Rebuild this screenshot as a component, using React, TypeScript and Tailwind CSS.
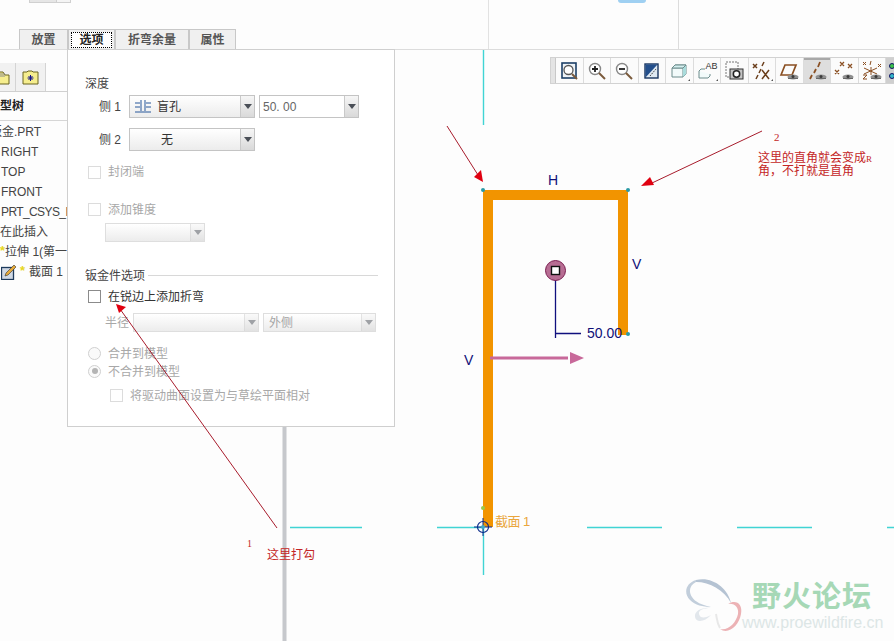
import type { ReactNode } from 'react'

const cjk = "font-['Liberation_Sans','Noto_Sans_CJK_SC',sans-serif]"

function Caret({ muted = false }: { muted?: boolean }) {
  return (
    <span className={`flex h-full w-[14px] shrink-0 items-center justify-center border-l border-[#c9c9c9] bg-gradient-to-b from-[#f6f6f6] to-[#d9d9d9] ${muted ? 'opacity-50' : ''}`}>
      <svg width="8" height="5" viewBox="0 0 8 5"><path d="M0 0h8L4 5z" fill="#4a4f57" /></svg>
    </span>
  )
}

function Combo({ width, height, children, muted = false }: { width: string; height: string; children?: ReactNode; muted?: boolean }) {
  return (
    <div className={`flex items-center border border-[#c4c4c4] bg-gradient-to-b from-white to-[#ececec] ${width} ${height} ${muted ? 'border-[#dedede] text-[#a5a5a5]' : 'text-[#333]'}`}>
      <div className="flex min-w-0 flex-1 items-center">{children}</div>
      <Caret muted={muted} />
    </div>
  )
}

function Check({ muted = false }: { muted?: boolean }) {
  return <span className={`block size-[13px] shrink-0 border bg-white ${muted ? 'border-[#dcdcdc]' : 'border-[#8b8b8b]'}`} />
}

function Radio({ on = false }: { on?: boolean }) {
  return (
    <span className="flex size-[13px] shrink-0 items-center justify-center rounded-full border border-[#d0d0d0] bg-[#fafafa]">
      {on && <span className="size-[6px] rounded-full bg-[#b4b4b4]" />}
    </span>
  )
}

function Label({ children }: { children: ReactNode }) {
  return <span className="translate-y-px">{children}</span>
}

function Tab({ label, width, active = false }: { label: string; width: string; active?: boolean }) {
  return (
    <div className={`flex h-[20px] items-center justify-center border border-b-0 border-[#c8c8c8] bg-[#f0f0f0] text-[12px] font-bold text-[#555] ${width}`}>
      {active ? <span className="border border-dotted border-black bg-white px-[7px] leading-[14px] text-[#222]">{label}</span> : label}
    </div>
  )
}

function ToolIcon({ children, pressed = false }: { children: ReactNode; pressed?: boolean }) {
  return (
    <div className={`flex h-full w-[27.5px] shrink-0 items-center justify-center border-r border-[#dcdcdc] ${pressed ? 'bg-[#dedede] shadow-[inset_0_2px_0_#a8a8a8]' : ''}`}>
      <svg width="24" height="24" viewBox="0 0 24 24" fill="none">{children}</svg>
    </div>
  )
}

const corner = <path d="M21 22h2v-2z" fill="#555" />

const eye = (
  <g>
    <ellipse cx="16" cy="18" rx="5.500" ry="2.600" fill="#909090" />
    <path d="M11 19.500h10" stroke="#666" />
    <circle cx="16" cy="17.500" r="1.500" fill="#3a3a3a" />
  </g>
)

function Toolbar() {
  return (
    <div className="absolute left-[550px] top-[57px] flex h-[27px] w-[344px] overflow-hidden border-y border-l border-[#d2d2d2] bg-[#fbfbfb]">
      <div className="w-[5px] shrink-0 border-r border-[#c8c8c8] bg-[#e4e4e4]" />
      <ToolIcon>
        <rect x="5" y="4" width="14" height="15" stroke="#1c3f66" strokeWidth="1.600" fill="#eef3f7" />
        <circle cx="11.500" cy="11" r="4.500" stroke="#555" strokeWidth="1.300" fill="#fff" />
        <path d="M15 15l5 5" stroke="#7a5a3c" strokeWidth="2" />
      </ToolIcon>
      <ToolIcon>
        <circle cx="10" cy="10" r="5.500" stroke="#888" strokeWidth="1.400" fill="#fff" />
        <path d="M7 10h6M10 7v6" stroke="#222" strokeWidth="1.800" />
        <path d="M14 14l6 6" stroke="#7a5a3c" strokeWidth="2" />
      </ToolIcon>
      <ToolIcon>
        <circle cx="10" cy="10" r="5.500" stroke="#888" strokeWidth="1.400" fill="#fff" />
        <path d="M7 10h6" stroke="#222" strokeWidth="1.800" />
        <path d="M14 14l6 6" stroke="#7a5a3c" strokeWidth="2" />
      </ToolIcon>
      <ToolIcon>
        <rect x="5" y="5" width="13" height="14" fill="#dfe9f2" stroke="#17345f" strokeWidth="1.400" />
        <path d="M5.500 5.500h12L5.500 18.500z" fill="#234f8c" />
        <path d="M10 17l6-7" stroke="#444" strokeDasharray="1.500 1" />
      </ToolIcon>
      <ToolIcon>
        <path d="M5 9l3-3h11v9l-3 3H5z" fill="#f2fafa" stroke="#6d8c8c" />
        <path d="M5 9h11v9" stroke="#6d8c8c" />
        <path d="M16 9l3-3v9l-3 3z" fill="#a9dcdc" />
        <path d="M5 9l3-3h11l-3 3z" fill="#d5f0f0" stroke="#6d8c8c" />
        {corner}
      </ToolIcon>
      <ToolIcon>
        <path d="M4 12l2-2h4M4 12v7h9l2-2v-2" stroke="#6d8c8c" fill="#f2fafa" />
        <text x="10.500" y="10" fontSize="9" fontFamily="Liberation Sans" fill="#333">AB</text>
        {corner}
      </ToolIcon>
      <ToolIcon>
        <rect x="4" y="3" width="12" height="15" stroke="#777" strokeDasharray="2 1" />
        <rect x="8" y="10" width="13" height="10" fill="#c4c4c4" stroke="#333" />
        <circle cx="14.500" cy="15" r="3.200" fill="#fff" stroke="#222" strokeWidth="1.500" />
      </ToolIcon>
      <ToolIcon>
        <path d="M3 5l4 4M7 5L3 9M14 3l-2 4M11 10l-2 4M8 16l-2 4" stroke="#6b3f1c" strokeWidth="1.500" />
        <path d="M12 11l7 9M19 11l-7 9" stroke="#6b3f1c" strokeWidth="1.500" />
        {corner}
      </ToolIcon>
      <ToolIcon>
        <path d="M4 16l4-10h11l-4 10z" stroke="#8a4f22" strokeWidth="1.700" />
        {eye}
      </ToolIcon>
      <ToolIcon pressed>
        <path d="M15 3l-2 5M11 10l-2 4M7 16l-2 4" stroke="#8a4f22" strokeWidth="1.800" />
        {eye}
      </ToolIcon>
      <ToolIcon>
        <path d="M8 3l4 4M12 3L8 7M16 5l4 4M20 5l-4 4M3 11l4 4M7 11l-4 4" stroke="#8a4f22" strokeWidth="1.300" />
        {eye}
      </ToolIcon>
      <ToolIcon>
        <path d="M3 3l3 3M6 3L3 6M11 2l-1 4M18 5l3 3M21 5l-3 3M4 9l13 6M11 8v8M17 9L4 15M3 16h4l-4 4h4" stroke="#8a4f22" strokeWidth="1" />
        {eye}
      </ToolIcon>
      <div className="flex h-full flex-1 flex-col items-start justify-center gap-[4px] bg-[#cfcfcf] pl-[3px]">
        <span className="size-[6px] rounded-full border border-[#116] bg-[#3bc24a]" />
        <span className="size-[6px] rounded-full border border-[#116] bg-[#35b6c8]" />
      </div>
    </div>
  )
}

function ModelTree() {
  const rows = ['RIGHT', 'TOP', 'FRONT']
  return (
    <div className={`absolute left-0 top-[63px] w-[67px] overflow-hidden text-[12px] text-[#444] ${cjk}`}>
      <div className="flex h-[29px] items-end border-b border-[#d0d0d0]">
        <div className="flex h-[29px] w-[16px] items-center justify-end overflow-hidden border-r border-[#d4d4d4] bg-[#f1f1f1] pr-[5px]">
          <svg width="16" height="16" viewBox="0 0 16 16" className="shrink-0">
            <path d="M1 3h8l2 3h4v9H1z" fill="#f6ee8e" stroke="#6b6420" />
            <path d="M5 5h6M5 7h6" stroke="#888" />
          </svg>
        </div>
        <div className="flex h-[29px] w-[30px] items-center justify-center border-r border-[#d4d4d4] bg-[#f1f1f1]">
          <svg width="17" height="16" viewBox="0 0 17 16">
            <path d="M1 3h4l1-1h4l1 1h5v12H1z" fill="#f6ee8e" stroke="#6b6420" />
            <path d="M8.500 6v6M5.500 9h6M6.500 7l4 4M10.500 7l-4 4" stroke="#14148a" />
          </svg>
        </div>
      </div>
      <div className="-ml-[12px] flex h-[29px] items-center border-b border-[#d6d6d6] font-bold whitespace-nowrap text-[#222]">模型树</div>
      <div className="-ml-[10px] mt-[1px] flex h-[20px] items-center whitespace-nowrap">钣金.PRT</div>
      {rows.map((row) => (
        <div key={row} className="flex h-[20px] items-center whitespace-nowrap pl-[1px]">{row}</div>
      ))}
      <div className="flex h-[20px] items-center whitespace-nowrap pl-[1px] tracking-[-0.6px]">PRT_CSYS_DEF</div>
      <div className="flex h-[20px] items-center whitespace-nowrap">在此插入</div>
      <div className="flex h-[20px] items-center whitespace-nowrap">
        <span className="-mt-[3px] w-[9px] text-[13px] font-bold leading-none text-[#e6d620]">*</span>拉伸 1(第一个)
      </div>
      <div className="flex h-[20px] items-center whitespace-nowrap pl-[1px]">
        <svg width="17" height="16" viewBox="0 0 17 16" className="shrink-0">
          <rect x="0.500" y="3.500" width="12" height="12" fill="#cfd8e4" stroke="#1d3a5c" strokeWidth="1.300" />
          <path d="M4 12l1-3 8-8 2 2-8 8z" fill="#e5a93a" stroke="#333" strokeWidth="0.600" />
        </svg>
        <span className="-mt-[3px] ml-[2px] w-[9px] text-[13px] font-bold leading-none text-[#e6d620]">*</span>截面 1
      </div>
    </div>
  )
}

function OptionsPanel() {
  return (
    <div className={`absolute left-[19px] top-[29px] text-[12px] ${cjk}`}>
      <div className="flex pr-0">
        <Tab label="放置" width="w-[49px]" />
        <Tab label="选项" width="w-[47px]" active />
        <Tab label="折弯余量" width="w-[74px]" />
        <Tab label="属性" width="w-[47px]" />
      </div>
      <div className="ml-[48px] h-[378px] w-[328px] border border-[#cfcfcf] bg-white pl-[17px] text-[#444]">
        <div className="mt-[23px] flex h-[20px] items-center"><Label>深度</Label></div>
        <div className="mt-[2px] flex h-[23px] items-center">
          <span className="ml-[14px] w-[30px]">侧 1</span>
          <Combo width="w-[126px]" height="h-[23px]">
            <svg width="16" height="14" viewBox="0 0 16 14" className="ml-[5px] mr-[6px] shrink-0">
              <path d="M0 3h5M0 7h5M11 3h5M11 7h5M6 0v11M10 0v11M0 12h16" stroke="#27579a" strokeWidth="1" fill="none" />
            </svg>
            盲孔
          </Combo>
          <div className="ml-[4px] flex h-[23px] w-[100px] items-center border border-[#c4c4c4] bg-white">
            <span className="flex-1 pl-[3px] text-[#666]">50. 00</span>
            <Caret />
          </div>
        </div>
        <div className="mt-[10px] flex h-[23px] items-center">
          <span className="ml-[14px] w-[30px]">侧 2</span>
          <Combo width="w-[126px]" height="h-[23px]">
            <span className="ml-[31px]">无</span>
          </Combo>
        </div>
        <div className="mt-[14px] flex h-[14px] items-center gap-[7px] pl-[3px] text-[#a8a8a8]">
          <Check muted />
          <span>封闭端</span>
        </div>
        <div className="mt-[23px] flex h-[14px] items-center gap-[7px] pl-[3px] text-[#a8a8a8]">
          <Check muted />
          <Label>添加锥度</Label>
        </div>
        <div className="ml-[20px] mt-[7px]">
          <Combo width="w-[100px]" height="h-[19px]" muted />
        </div>
        <div className="mt-[25px] flex h-[16px] items-center gap-[3px] pr-[16px]">
          <Label>钣金件选项</Label>
          <span className="h-px flex-1 bg-[#d8d8d8]" />
        </div>
        <div className="mt-[6px] flex h-[14px] items-center gap-[7px] pl-[3px] text-[#333]">
          <Check />
          <Label>在锐边上添加折弯</Label>
        </div>
        <div className="mt-[10px] flex h-[19px] items-center text-[#a8a8a8]">
          <span className="ml-[20px] w-[28px]">半径</span>
          <Combo width="w-[126px]" height="h-[19px]" muted />
          <div className="ml-[4px]">
            <Combo width="w-[113px]" height="h-[19px]" muted>
              <span className="ml-[5px]">外侧</span>
            </Combo>
          </div>
        </div>
        <div className="mt-[14px] flex h-[14px] items-center gap-[7px] pl-[3px] text-[#a8a8a8]">
          <Radio />
          <Label>合并到模型</Label>
        </div>
        <div className="mt-[4px] flex h-[14px] items-center gap-[7px] pl-[3px] text-[#a8a8a8]">
          <Radio on />
          <Label>不合并到模型</Label>
        </div>
        <div className="mt-[10px] flex h-[14px] items-center gap-[7px] pl-[25px] text-[#a8a8a8]">
          <Check muted />
          <Label>将驱动曲面设置为与草绘平面相对</Label>
        </div>
      </div>
    </div>
  )
}

// Sketch geometry: references, section outline, dimension and flip arrow
function SketchLines() {
  return (
    <svg className="absolute inset-0" width="894" height="641" viewBox="0 0 894 641" fill="none">
      <path d="M483.500 50v75M483.500 527v48" stroke="#40d4d4" strokeWidth="1.400" />
      <path d="M290 527.500h72M437 527.500h46M587 527.500h75M737 527.500h75M887 527.500h7" stroke="#40d4d4" strokeWidth="1.400" />
      <path d="M284.500 427v214" stroke="#c6c8cc" strokeWidth="4" />
      <path d="M488 195V527M483 195H628M623 190V335" stroke="#f29400" strokeWidth="10" />
      <path d="M483 190h145v5H483z" fill="#f29400" />
      <path d="M555.500 278v60M555 333.500h26" stroke="#10107e" strokeWidth="1.300" />
      <circle cx="555.500" cy="270.500" r="10" fill="#b76d93" stroke="#7a1d50" />
      <rect x="551.500" y="266.500" width="8" height="8" fill="#fff" stroke="#111" strokeWidth="1.400" />
      <path d="M490 358h78" stroke="#c8699a" strokeWidth="3" />
      <path d="M570 352l14 6-14 6z" fill="#c8699a" />
      <circle cx="483" cy="190" r="2" fill="#2b9aa6" />
      <circle cx="628" cy="190" r="2" fill="#2b9aa6" />
      <circle cx="628" cy="334" r="2" fill="#2b9aa6" />
      <circle cx="483" cy="508" r="2" fill="#9ac94a" />
      <circle cx="483" cy="527" r="5.500" stroke="#0b2a8a" strokeWidth="1.200" />
      <path d="M483 518v18M474 527h18" stroke="#0b2a8a" />
      <circle cx="483" cy="527" r="2" fill="#3fa8c4" />
    </svg>
  )
}

// Red callouts drawn over the dialog and the sketch
function Callouts() {
  return (
    <svg className="absolute inset-0" width="894" height="641" viewBox="0 0 894 641" fill="none">
      <path d="M447 126L478 175M762 131L652 183M277 528L120 309" stroke="#a81c2c" />
      <path d="M483 182l-9-5 7-7z" fill="#e00010" />
      <path d="M641 186l9-9 4 8z" fill="#e00010" />
      <path d="M116 304l10 3-7 6z" fill="#e00010" />
    </svg>
  )
}

// Forum logo: two open wings
function Butterfly() {
  return (
    <svg width="62" height="62" viewBox="0 0 62 62" fill="none" className="absolute left-[684px] top-[576px]">
      <path d="M12 4C28 0 44 12 47 27C40 14 26 6 12 6z" fill="#b5c3d3" />
      <path d="M12 4C2 7-1 17 6 24c5 5 13 7 21 7-9-2-16-5-19-10C4 15 6 9 12 6z" fill="#c2cedb" />
      <path d="M27 32c-9-1-17 3-16 9s10 5 16-2c-5 3-11 4-12-1-1-4 5-6 12-6z" fill="#e2e7ec" />
      <path d="M44 28c8-5 15 0 13 10-2 12-13 21-21 15 8 2 16-6 18-15 1-6-3-11-10-10z" fill="#ecb2b5" />
      <path d="M32 38c1 5 1 9 4 14" stroke="#e8e8e8" strokeWidth="2" />
    </svg>
  )
}

export default function App() {
  return (
    <div className={`relative h-[641px] w-[894px] overflow-hidden bg-[#fdfdfd] ${cjk}`}>
      {/* top strip of the ribbon */}
      <div className="flex h-[50px] border-b border-[#dcdcdc]">
        <div className="ml-[29px] flex h-[3px] w-[42px] border border-t-0 border-[#d0d0d0] bg-[#e6e6e6]">
          <span className="ml-auto h-full w-[14px] border-l border-[#cfcfcf] bg-[#f4f4f4]" />
        </div>
        <div className="ml-[417px] h-full w-px bg-[#e2e2e2]" />
        <div className="ml-[129px] h-[3px] w-[28px] rounded-b-[3px] bg-[#9fd0f2]" />
        <div className="ml-[32px] h-full w-px bg-[#dcdcdc]" />
      </div>

      <SketchLines />
      <Toolbar />
      <ModelTree />
      <OptionsPanel />

      <span className="absolute left-[548px] top-[173px] text-[14px] leading-none text-[#101078]">H</span>
      <span className="absolute left-[632px] top-[257px] text-[14px] leading-none text-[#101078]">V</span>
      <span className="absolute left-[464px] top-[353px] text-[14px] leading-none text-[#101078]">V</span>
      <span className="absolute left-[587px] top-[326px] text-[14px] leading-none text-[#101078]">50.00</span>
      <span className="absolute left-[495px] top-[515px] text-[13px] leading-none tracking-[-0.5px] text-[#eaa63c]">截面 1</span>

      <Callouts />

      <span className="absolute left-[774px] top-[132px] font-['Liberation_Serif'] text-[11px] leading-none text-[#c42626]">2</span>
      <div className="absolute left-[758px] top-[152px] w-[124px] text-[12px] leading-[12px] text-[#c42626]">
        这里的直角就会变成<span className="font-['Liberation_Serif'] text-[9px]">R</span>
        <br />
        角，不打就是直角
      </div>
      <span className="absolute left-[247px] top-[539px] font-['Liberation_Serif'] text-[10px] leading-none text-[#c42626]">1</span>
      <span className="absolute left-[267px] top-[549px] text-[12px] leading-none text-[#c42626]">这里打勾</span>

      <Butterfly />
      <span className="absolute left-[752px] top-[577px] font-['Noto_Sans_CJK_SC'] text-[29px] font-bold leading-[34px] tracking-[1px] text-[#a6d8b6]">野火论坛</span>
      <span className="absolute left-[742px] top-[614px] font-['Liberation_Sans'] text-[16px] leading-[18px] text-[#dce6e6]">www.proewildfire.cn</span>
    </div>
  )
}
